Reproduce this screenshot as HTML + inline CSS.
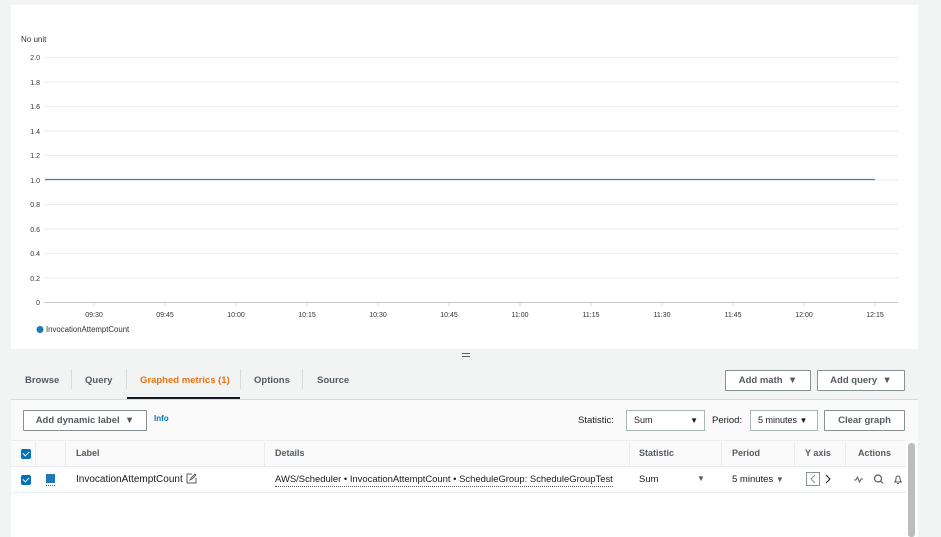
<!DOCTYPE html>
<html><head><meta charset="utf-8"><style>
*{box-sizing:border-box;margin:0;padding:0}
body{width:941px;height:537px;overflow:hidden;background:#f2f3f3;font-family:"Liberation Sans",sans-serif;color:#16191f;position:relative}
.abs{position:absolute}
.panel{left:11px;top:5px;width:907px;height:344px;background:#fff}
.t{font-size:7px;color:#333;position:absolute}
.tab{position:absolute;top:375px;font-size:9.5px;font-weight:bold;color:#545b64}
.sep{position:absolute;top:369px;width:1px;height:20px;background:#d5dbdb}
.btn{position:absolute;background:#fff;border:1px solid #879196;font-size:9.5px;font-weight:bold;color:#545b64;text-align:center;border-radius:1px}
.hd{position:absolute;top:448px;font-size:9px;font-weight:bold;color:#545b64}
.cell{position:absolute;top:474px;font-size:9.5px;color:#16191f}
.vl{position:absolute;top:442px;width:1px;height:24px;background:#eaeded}
.cb{position:absolute;width:10px;height:10px;background:#0073bb;border-radius:2px}
.cb:after{content:"";position:absolute;left:3px;top:1px;width:3px;height:5px;border:solid #fff;border-width:0 1.5px 1.5px 0;transform:rotate(45deg)}
</style></head><body>
<div class="abs panel"></div>
<div class="t" style="left:21px;top:35px;font-size:8px">No unit</div>
<svg class="abs" style="left:0;top:0" width="941" height="349">
<g stroke="#eaeded" stroke-width="1">
<line x1="44" x2="898" y1="57.5" y2="57.5"/><line x1="44" x2="898" y1="82" y2="82"/><line x1="44" x2="898" y1="106.5" y2="106.5"/><line x1="44" x2="898" y1="131" y2="131"/><line x1="44" x2="898" y1="155.5" y2="155.5"/><line x1="44" x2="898" y1="180" y2="180"/><line x1="44" x2="898" y1="204.5" y2="204.5"/><line x1="44" x2="898" y1="229" y2="229"/><line x1="44" x2="898" y1="253.5" y2="253.5"/><line x1="44" x2="898" y1="278" y2="278"/>
</g>
<line x1="44" x2="898" y1="302.5" y2="302.5" stroke="#c6c9cc"/>
<g stroke="#d5dbdb"><line x1="94" x2="94" y1="303" y2="306"/><line x1="165" x2="165" y1="303" y2="306"/><line x1="236" x2="236" y1="303" y2="306"/><line x1="307" x2="307" y1="303" y2="306"/><line x1="378" x2="378" y1="303" y2="306"/><line x1="449" x2="449" y1="303" y2="306"/><line x1="520" x2="520" y1="303" y2="306"/><line x1="591" x2="591" y1="303" y2="306"/><line x1="662" x2="662" y1="303" y2="306"/><line x1="733" x2="733" y1="303" y2="306"/><line x1="804" x2="804" y1="303" y2="306"/><line x1="875" x2="875" y1="303" y2="306"/></g>
<line x1="45" x2="875" y1="179.5" y2="179.5" stroke="#4f7aa8" stroke-width="1.2"/>
<circle cx="40" cy="329.5" r="3.5" fill="#1f77b4"/>
<g font-family="Liberation Sans" font-size="7" fill="#333" text-anchor="end">
<text x="40" y="60">2.0</text><text x="40" y="85">1.8</text><text x="40" y="109">1.6</text><text x="40" y="134">1.4</text><text x="40" y="158">1.2</text><text x="40" y="183">1.0</text><text x="40" y="207">0.8</text><text x="40" y="232">0.6</text><text x="40" y="256">0.4</text><text x="40" y="281">0.2</text><text x="40" y="305">0</text>
</g>
<g font-family="Liberation Sans" font-size="7" fill="#333" text-anchor="middle">
<text x="94" y="317">09:30</text><text x="165" y="317">09:45</text><text x="236" y="317">10:00</text><text x="307" y="317">10:15</text><text x="378" y="317">10:30</text><text x="449" y="317">10:45</text><text x="520" y="317">11:00</text><text x="591" y="317">11:15</text><text x="662" y="317">11:30</text><text x="733" y="317">11:45</text><text x="804" y="317">12:00</text><text x="875" y="317">12:15</text>
</g>
<text x="46" y="332" font-family="Liberation Sans" font-size="7.8" fill="#333">InvocationAttemptCount</text>
</svg>
<div class="abs" style="left:462px;top:353px;width:8px;height:1px;background:#545b64"></div>
<div class="abs" style="left:462px;top:356px;width:8px;height:1px;background:#545b64"></div>
<div class="tab" style="left:25px">Browse</div>
<div class="sep" style="left:71px"></div>
<div class="tab" style="left:85px">Query</div>
<div class="sep" style="left:126px"></div>
<div class="tab" style="left:140px;color:#ec7211">Graphed metrics (1)</div>
<div class="abs" style="left:127px;top:397px;width:113px;height:2px;background:#16191f"></div>
<div class="sep" style="left:240px"></div>
<div class="tab" style="left:254px">Options</div>
<div class="sep" style="left:302px"></div>
<div class="tab" style="left:317px">Source</div>
<div class="btn" style="left:725px;top:370px;width:86px;height:21px;line-height:19px">Add math &nbsp;▼</div>
<div class="btn" style="left:817px;top:370px;width:88px;height:21px;line-height:19px">Add query &nbsp;▼</div>
<div class="abs" style="left:11px;top:399px;width:907px;height:1px;background:#d5dbdb"></div>
<div class="abs" style="left:11px;top:400px;width:907px;height:137px;background:#fafafa"></div>
<div class="btn" style="left:23px;top:410px;width:124px;height:21px;line-height:19px">Add dynamic label &nbsp;▼</div>
<div class="abs" style="left:154px;top:414px;font-size:8px;font-weight:bold;color:#0073bb">Info</div>
<div class="abs" style="left:578px;top:415px;font-size:9.5px">Statistic:</div>
<div class="abs" style="left:626px;top:410px;width:79px;height:21px;background:#fff;border:1px solid #aab7b8;font-size:9px;line-height:19px;padding-left:7px">Sum<span style="position:absolute;right:6px;font-size:8px">▼</span></div>
<div class="abs" style="left:712px;top:415px;font-size:9.5px">Period:</div>
<div class="abs" style="left:750px;top:410px;width:68px;height:21px;background:#fff;border:1px solid #aab7b8;font-size:9px;line-height:19px;padding-left:7px">5 minutes <span style="font-size:8px">▼</span></div>
<div class="btn" style="left:824px;top:410px;width:81px;height:21px;line-height:19px">Clear graph</div>
<div class="abs" style="left:11px;top:440px;width:895px;height:1px;background:#eaeded"></div>
<div class="abs" style="left:11px;top:466px;width:895px;height:27px;background:#fff;border-top:1px solid #eaeded;border-bottom:1px solid #eaeded"></div>
<div class="abs" style="left:11px;top:493px;width:895px;height:44px;background:#fff"></div>
<div class="abs" style="left:906px;top:441px;width:12px;height:96px;background:#fff"></div>
<div class="abs" style="left:908px;top:443px;width:7px;height:94px;background:#bcbcbc;border-radius:3px"></div>
<div class="vl" style="left:35px"></div><div class="vl" style="left:65px"></div><div class="vl" style="left:264px"></div><div class="vl" style="left:629px"></div><div class="vl" style="left:721px"></div><div class="vl" style="left:794px"></div><div class="vl" style="left:845px"></div>
<div class="cb" style="left:21px;top:449px"></div>
<div class="hd" style="left:76px">Label</div>
<div class="hd" style="left:275px">Details</div>
<div class="hd" style="left:639px">Statistic</div>
<div class="hd" style="left:732px">Period</div>
<div class="hd" style="left:805px">Y axis</div>
<div class="hd" style="left:858px">Actions</div>
<div class="cb" style="left:21px;top:475px"></div>
<div class="abs" style="left:46px;top:474px;width:9px;height:9px;background:#1f77b4"></div>
<div class="abs" style="left:46px;top:485px;width:9px;border-top:1px dotted #555"></div>
<div class="cell" style="left:76px;font-size:10px">InvocationAttemptCount</div>
<svg class="abs" style="left:186px;top:473px" width="11" height="11" viewBox="0 0 11 11"><path d="M6 1H1v9h9V5" fill="none" stroke="#545b64"/><path d="M4 7l1-2 4-4 1 1-4 4z" fill="none" stroke="#545b64" stroke-width=".9"/></svg>
<div class="cell" style="left:275px;font-size:9.45px;border-bottom:1px dotted #555;padding-bottom:1px">AWS/Scheduler • InvocationAttemptCount • ScheduleGroup: ScheduleGroupTest</div>
<div class="cell" style="left:639px">Sum</div>
<div class="cell" style="left:697px;font-size:8px;color:#545b64">▼</div>
<div class="cell" style="left:732px">5 minutes <span style="font-size:8px;color:#545b64">▼</span></div>
<div class="abs" style="left:806px;top:472px;width:14px;height:14px;border:1px solid #879196"></div>
<svg class="abs" style="left:806px;top:472px" width="26" height="14"><path d="M9 3L5 7l4 4" fill="none" stroke="#879196"/><path d="M20 3l4 4-4 4" fill="none" stroke="#16191f"/></svg>
<svg class="abs" style="left:853px;top:473px" width="52" height="12"><path d="M1 7h2l1.5-3 2 5 1.5-3h2" fill="none" stroke="#545b64"/><circle cx="25" cy="5.5" r="3.5" fill="none" stroke="#545b64" stroke-width="1.2"/><path d="M27.5 8l2.5 2.5" stroke="#545b64" stroke-width="1.2"/><path d="M41 9h8M42 9c1-1 1-2 1-4a2 2 0 0 1 4 0c0 2 0 3 1 4M44 10.5h2" fill="none" stroke="#545b64" stroke-width="1.1"/></svg>
</body></html>
